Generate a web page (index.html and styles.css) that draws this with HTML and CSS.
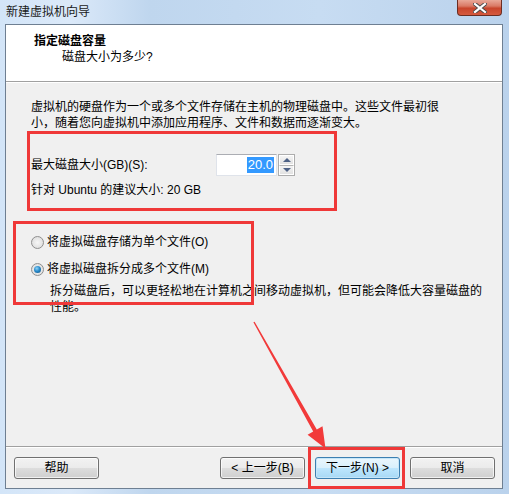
FILE: index.html
```html
<!DOCTYPE html>
<html>
<head>
<meta charset="utf-8">
<link rel="stylesheet" href="styles.css">
</head>
<body>
<div class="frame">
  <div class="titlebar">
    <span class="title">新建虚拟机向导</span>
    <div class="close">
      <svg width="14" height="10" viewBox="0 0 14 10">
        <path d="M2 1 L12 9 M12 1 L2 9" stroke="#4a4a4a" stroke-width="4" stroke-linecap="square"/>
        <path d="M2 1 L12 9 M12 1 L2 9" stroke="#ffffff" stroke-width="2.2" stroke-linecap="square"/>
      </svg>
    </div>
  </div>
  <div class="client">
    <div class="header">
      <div class="h-title">指定磁盘容量</div>
      <div class="h-sub">磁盘大小为多少?</div>
    </div>
    <div class="content">
      <p class="intro">虚拟机的硬盘作为一个或多个文件存储在主机的物理磁盘中。这些文件最初很<br>小，随着您向虚拟机中添加应用程序、文件和数据而逐渐变大。</p>
      <div class="size-row">
        <span class="label">最大磁盘大小(GB)(S):</span>
        <div class="spin">
          <div class="spin-input"><span class="sel">20.0</span></div>
          <div class="spin-btns">
            <div class="spin-btn"><span class="tri up"></span></div>
            <div class="spin-btn"><span class="tri down"></span></div>
          </div>
        </div>
      </div>
      <div class="recommend">针对 Ubuntu 的建议大小: 20 GB</div>
      <div class="radio first"><span class="circle"></span><span>将虚拟磁盘存储为单个文件(O)</span></div>
      <div class="radio second"><span class="circle checked"></span><span>将虚拟磁盘拆分成多个文件(M)</span></div>
      <p class="desc">拆分磁盘后，可以更轻松地在计算机之间移动虚拟机，但可能会降低大容量磁盘的<br>性能。</p>
    </div>
    <div class="footer">
      <button class="btn">帮助</button>
      <div class="spacer"></div>
      <button class="btn">&lt; 上一步(B)</button>
      <button class="btn default">下一步(N) &gt;</button>
      <button class="btn">取消</button>
    </div>
  </div>
</div>
<div class="mark mark-size"></div>
<div class="mark mark-radio"></div>
<div class="mark mark-next"></div>
<svg class="arrow" width="509" height="494" viewBox="0 0 509 494">
  <polygon points="253.4,322.3 254.6,321.7 316.8,429.4 322.5,426.2 325.5,448.5 307.6,434.8 313.2,431.6" fill="#f23a3a"/>
</svg>
</body>
</html>
```

FILE: styles.css
```css
* { box-sizing: border-box; }
html, body {
  margin: 0;
  padding: 0;
}
body {
  width: 509px;
  height: 494px;
  position: relative;
  overflow: hidden;
  font-family: "Liberation Sans", "Noto Sans CJK SC", sans-serif;
  font-size: 12px;
  color: #000;
  background: linear-gradient(to bottom, #c9def4 0, #bcd4ee 40%, #c2d9f1 100%);
}
.frame {
  width: 509px;
  height: 494px;
  display: flex;
  flex-direction: column;
  background: linear-gradient(to right, #d3e5f8 0, #dbe9f9 70px, #bfd6ee 150px, #c7dcf2 320px, #bad2ec 509px);
}
.titlebar {
  height: 24px;
  display: flex;
  align-items: flex-start;
  flex: none;
}
.title {
  margin-left: 6px;
  line-height: 24px;
  font-size: 12px;
  color: #1a1a1a;
}
.close {
  margin-left: auto;
  margin-right: 7px;
  width: 45px;
  height: 16px;
  border: 1px solid #6b2d22;
  border-top: none;
  border-radius: 0 0 4px 4px;
  background: linear-gradient(to bottom, #e9a898 0, #da7a66 40%, #c8452c 55%, #d55a3f 100%);
  display: flex;
  align-items: center;
  justify-content: center;
}
.client {
  margin: 0 6px 0 5px;
  height: 465px;
  border: 1px solid #6e7f92;
  background: #f0f0f0;
  display: flex;
  flex-direction: column;
  flex: none;
}
.header {
  height: 57px;
  background: #fff;
  border-bottom: 1px solid #a0a0a0;
  padding: 8px 0 0 28px;
  flex: none;
}
.h-title {
  font-weight: bold;
  line-height: 16px;
}
.h-sub {
  line-height: 16px;
  margin-left: 28px;
}
.content {
  flex: 1;
  padding: 16px 0 0 25px;
  border-top: 1px solid #fff;
}
.intro, .desc {
  margin: 0;
  line-height: 16px;
  white-space: nowrap;
}
.size-row {
  margin-top: 23px;
  height: 22px;
  display: flex;
  align-items: center;
}
.label {
  width: 185px;
  line-height: 16px;
}
.spin {
  display: flex;
  height: 22px;
  gap: 1px;
}
.spin-input {
  width: 61px;
  height: 22px;
  background: #fff;
  border: 1px solid #dfe3ea;
  border-top-color: #abadb3;
  display: flex;
  align-items: center;
  justify-content: flex-end;
  padding-right: 2px;
}
.sel {
  background: #3399ff;
  color: #fff;
  font-size: 13px;
  line-height: 16px;
  padding: 0 1px;
}
.spin-btns {
  display: flex;
  flex-direction: column;
  gap: 0;
  width: 17px;
  border: 1px solid #adadad;
  background: #f0f0f0;
}
.spin-btn {
  flex: 1;
  display: flex;
  align-items: center;
  justify-content: center;
  border: 1px solid #fff;
  background: linear-gradient(to bottom, #f4f4f4, #e2e2e2);
}
.spin-btn + .spin-btn {
  border-top: 1px solid #b5b5b5;
}
.tri {
  width: 0;
  height: 0;
  border-left: 4px solid transparent;
  border-right: 4px solid transparent;
}
.tri.up { border-bottom: 4px solid #4d6185; }
.tri.down { border-top: 4px solid #4d6185; }
.recommend {
  margin-top: 6px;
  line-height: 16px;
}
.radio {
  display: flex;
  align-items: center;
  gap: 3px;
  line-height: 16px;
  height: 16px;
}
.radio.first { margin-top: 36px; }
.radio.second { margin-top: 11px; }
.circle {
  width: 13px;
  height: 13px;
  border-radius: 50%;
  border: 1px solid #8f8f8f;
  background: radial-gradient(circle at 50% 50%, #f6f6f6 0, #e4e4e4 60%, #d6d6d6 100%);
  display: flex;
  align-items: center;
  justify-content: center;
}
.circle.checked::after {
  content: "";
  width: 7px;
  height: 7px;
  border-radius: 50%;
  background: radial-gradient(circle at 40% 35%, #8fd3f7 0, #2a8ccc 45%, #0f4f80 100%);
}
.desc {
  margin-top: 6px;
  margin-left: 19px;
}
.footer {
  height: 42px;
  flex: none;
  border-top: 1px solid #a0a0a0;
  box-shadow: inset 0 1px 0 #fff;
  display: flex;
  align-items: flex-start;
  padding: 10px 7px 0 8px;
  gap: 10px;
}
.spacer { flex: 1; }
.btn {
  width: 85px;
  height: 22px;
  font-family: "Liberation Sans", "Noto Sans CJK SC", sans-serif;
  font-size: 12px;
  color: #000;
  border: 1px solid #707070;
  border-radius: 3px;
  background: linear-gradient(to bottom, #f2f2f2 0, #ebebeb 50%, #dddddd 51%, #cfcfcf 100%);
  box-shadow: inset 0 0 0 1px rgba(255,255,255,0.7);
  padding: 0;
  line-height: 18px;
}
.btn.default {
  border-color: #3c7fb1;
  background: linear-gradient(to bottom, #eaf6fd 0, #d9f0fc 50%, #bee6fd 51%, #a7d9f5 100%);
  box-shadow: inset 0 0 0 1px #c6e6f8;
}
.mark {
  position: absolute;
  border: 3px solid #ef3838;
}
.mark-size { left: 27px; top: 131px; width: 310px; height: 80px; }
.mark-radio { left: 13px; top: 221px; width: 241px; height: 84px; }
.mark-next { left: 308px; top: 447px; width: 97px; height: 42px; }
.arrow {
  position: absolute;
  left: 0;
  top: 0;
}
```
